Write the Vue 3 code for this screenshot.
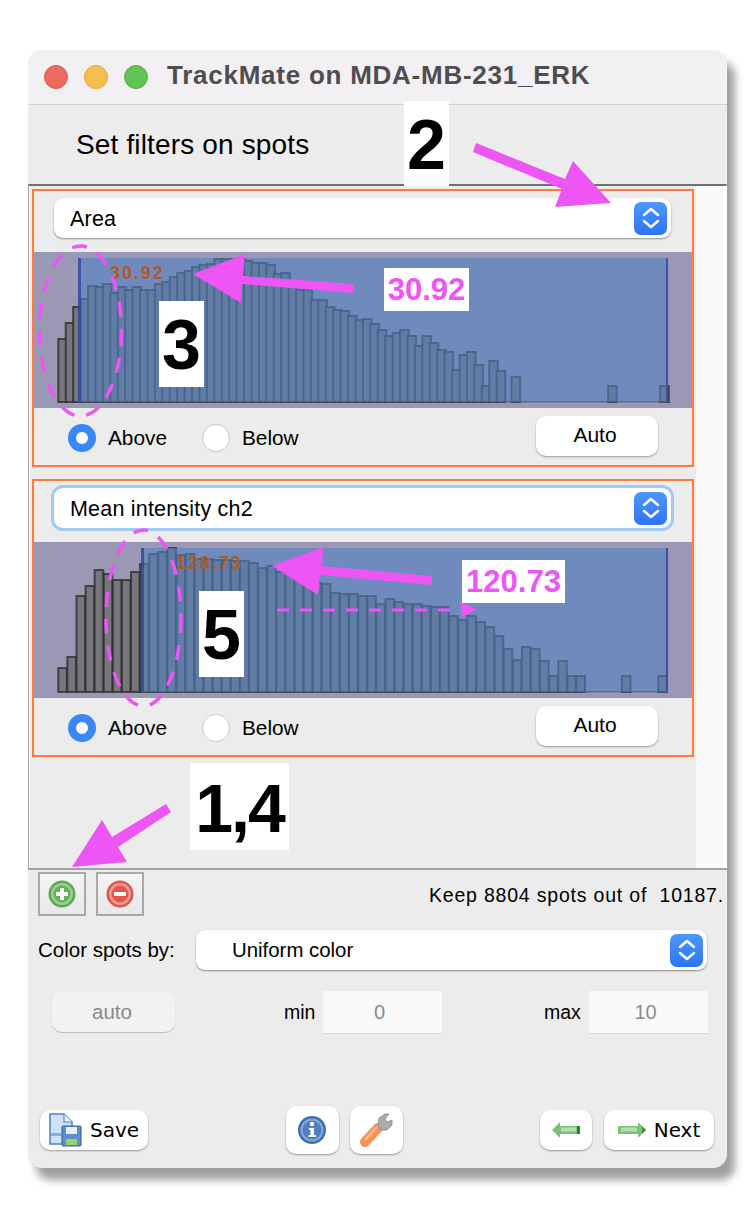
<script setup>
const panels = [
  {
    name: 'Area',
    focused: false,
    value: '30.92',
    threshold: 45,
    labelX: 76,
    step: 7.43,
    heights: [63, 79, 95, 103, 116, 115, 118, 109, 115, 112, 115, 112, 112, 118, 120, 125, 129, 131, 135, 137, 138, 143, 143, 143, 143, 141, 139, 139, 137, 128, 129, 118, 112, 112, 102, 102, 95, 92, 91, 86, 82, 83, 78, 72, 66, 69, 72, 66, 56, 66, 59, 52, 50, 32, 47, 50, 37, 16, 41, 31, 0, 25, 0, 0, 0, 0, 0, 0, 0, 0, 0, 0, 0, 0, 16, 0, 0, 0, 0, 0, 0, 16]
  },
  {
    name: 'Mean intensity ch2',
    focused: true,
    value: '128.73',
    threshold: 108,
    labelX: 142,
    step: 9.09,
    heights: [24, 35, 96, 106, 122, 118, 112, 112, 120, 128, 138, 140, 144, 137, 138, 133, 133, 132, 132, 131, 131, 129, 124, 126, 120, 118, 115, 113, 109, 108, 99, 98, 98, 96, 96, 88, 93, 90, 88, 88, 86, 85, 85, 76, 72, 76, 70, 65, 56, 43, 32, 45, 43, 31, 16, 31, 16, 16, 0, 0, 0, 0, 16, 0, 0, 0, 16]
  }
]

const keepText = 'Keep 8804 spots out of  10187.'

const bars = (panel) => panel.heights
  .map((h, i) => ({ i, h, x: 24.3 + panel.step * i }))
  .filter((b) => b.h > 0)
</script>

<template>
  <div class="page">
    <div class="window">
      <div class="titlebar">
        <span class="light red"></span>
        <span class="light yellow"></span>
        <span class="light green"></span>
        <span class="title">TrackMate on MDA-MB-231_ERK</span>
      </div>
      <div class="heading">Set filters on spots</div>

      <div class="scroller">
        <div class="scroll-main">
          <div v-for="panel in panels" :key="panel.name" class="panel">
            <div class="select panel-select" :class="{ focused: panel.focused }">
              <span class="select-text">{{ panel.name }}</span>
              <span class="stepper">
                <svg width="20" height="24" viewBox="0 0 20 24">
                  <path d="M3 9 L10 3 L17 9 M3 15 L10 21 L17 15" fill="none" stroke="#fff" stroke-width="2.4" stroke-linecap="round" stroke-linejoin="round" />
                </svg>
              </span>
            </div>

            <svg class="hist" width="658" height="156" viewBox="0 0 658 156">
              <rect width="658" height="156" fill="#9a98b4" />
              <g v-for="b in bars(panel)" :key="b.i">
                <rect :x="b.x" :y="150 - b.h" width="8.6" :height="b.h" fill="#77767c" stroke="#2e2e32" stroke-opacity="0.8" stroke-width="2" />
              </g>
              <rect :x="panel.threshold" y="6" :width="633 - panel.threshold" height="144" fill="rgb(84,130,195)" fill-opacity="0.6" />
              <rect :x="panel.threshold - 1" y="6" width="3" height="144" fill="#2f3f9a" fill-opacity="0.75" />
              <rect x="632" y="6" width="2" height="144" fill="#3f50a4" />
              <rect :x="panel.threshold" y="149" :width="633 - panel.threshold" height="1.5" fill="#4a6088" fill-opacity="0.7" />
              <text class="hist-value" :x="panel.labelX" y="27">{{ panel.value }}</text>
            </svg>

            <div class="radio-row">
              <span class="radio on"></span>
              <span class="radio-label">Above</span>
              <span class="radio off"></span>
              <span class="radio-label">Below</span>
              <button class="btn auto-btn">Auto</button>
            </div>
          </div>
        </div>
        <div class="scrollbar"></div>
      </div>

      <div class="bottom">
        <div class="tool-row">
          <button class="tool-btn">
            <svg width="30" height="30" viewBox="0 0 30 30">
              <circle cx="15" cy="15" r="13.5" fill="#5fa75a" />
              <circle cx="15" cy="15" r="11" fill="#9bd08f" />
              <circle cx="15" cy="15" r="8.5" fill="#63b35c" />
              <path d="M15 9 V21 M9 15 H21" stroke="#fff" stroke-width="4" />
            </svg>
          </button>
          <button class="tool-btn">
            <svg width="30" height="30" viewBox="0 0 30 30">
              <circle cx="15" cy="15" r="13.5" fill="#d65a4e" />
              <circle cx="15" cy="15" r="11" fill="#f09a90" />
              <circle cx="15" cy="15" r="8.5" fill="#e2574c" />
              <path d="M9 15 H21" stroke="#fff" stroke-width="4" />
            </svg>
          </button>
          <span class="keep">{{ keepText }}</span>
        </div>

        <div class="color-row">
          <span class="color-label">Color spots by:</span>
          <div class="select color-select">
            <span>Uniform color</span>
            <span class="stepper">
              <svg width="20" height="24" viewBox="0 0 20 24">
                <path d="M3 9 L10 3 L17 9 M3 15 L10 21 L17 15" fill="none" stroke="#fff" stroke-width="2.4" stroke-linecap="round" stroke-linejoin="round" />
              </svg>
            </span>
          </div>
        </div>

        <div class="range-row">
          <button class="auto-disabled">auto</button>
          <span class="min-label">min</span>
          <span class="range-input">0</span>
          <span class="max-label">max</span>
          <span class="range-input">10</span>
        </div>

        <div class="nav-row">
          <button class="btn nav-btn save-btn">
            <svg width="33" height="34" viewBox="0 0 33 34">
              <path d="M1 1 H15 L23 9 V31 H1 Z" fill="#cfe0f7" stroke="#4f86c9" stroke-width="1.6" />
              <path d="M15 1 V9 H23" fill="#eef4fc" stroke="#4f86c9" stroke-width="1.2" />
              <rect x="2" y="20" width="10" height="3" fill="#7fb2ea" />
              <rect x="13" y="13" width="19" height="20" rx="1.5" fill="#5f8fc9" stroke="#34669f" stroke-width="1.2" />
              <rect x="17" y="14" width="11" height="7" fill="#e8eff8" />
              <rect x="17" y="26" width="11" height="6" fill="#9fce6e" />
            </svg>
            <span>Save</span>
          </button>

          <div class="nav-group center">
            <button class="btn icon-btn">
              <svg width="30" height="30" viewBox="0 0 30 30">
                <circle cx="15" cy="15" r="14" fill="#3f6fae" />
                <circle cx="15" cy="15" r="11.5" fill="#86a8d4" />
                <circle cx="15" cy="15" r="9.5" fill="#4f7fbc" />
                <circle cx="15" cy="9" r="2.2" fill="#fff" />
                <path d="M12 13 H17 V20 H19 V22 H11.5 V20 H13.5 V15 H12 Z" fill="#fff" />
              </svg>
            </button>
            <button class="btn icon-btn">
              <svg width="34" height="36" viewBox="0 0 34 36">
                <path d="M6 30 L19 16" stroke="#f3955a" stroke-width="10" stroke-linecap="round" />
                <path d="M7 27 L17 16" stroke="#f9bb91" stroke-width="2.5" stroke-linecap="round" />
                <path d="M19 14 L20 6 L26 2 L30 2 L26 7 L28 10 L33 8 L33 13 L28 18 L22 18 Z" fill="#ababab" stroke="#868686" stroke-width="0.8" />
              </svg>
            </button>
          </div>

          <div class="nav-group">
            <button class="btn back-btn">
              <svg width="28" height="16" viewBox="0 0 28 16">
                <path d="M0 8 L8 0 V4 H28 V12 H8 V16 Z" fill="#7cc07a" />
                <rect x="9" y="5.5" width="15" height="4" fill="#b6deb0" />
                <rect x="25" y="4" width="3" height="8" fill="#2f7a33" />
              </svg>
            </button>
            <button class="btn nav-btn next-btn">
              <svg width="28" height="16" viewBox="0 0 28 16">
                <path d="M28 8 L20 0 V4 H0 V12 H20 V16 Z" fill="#7cc07a" />
                <rect x="3" y="5.5" width="16" height="4" fill="#b6deb0" />
                <path d="M28 8 L24 4 V12 Z" fill="#3f8f45" />
              </svg>
              <span>Next</span>
            </button>
          </div>
        </div>
      </div>
    </div>

    <!-- annotations drawn over the screenshot -->
    <svg class="marks" width="754" height="1220" viewBox="0 0 754 1220">
      <g fill="#ee55f5">
        <polygon points="476,143 565,179 573,161 611,203 555,207 562,189 473,152" />
        <polygon points="193,274 245,254 243,276 354,284 353,293 242,284 241,303" />
        <polygon points="272,566 323,547 322,566 432,576 432,585 320,575 318,595" />
        <polygon points="72,867 102,820 112,837 166,804 171,812 118,847 127,862" />
        <polygon points="460,602 477,609.5 462,617" />
      </g>
      <g fill="none" stroke="#ee55f5" stroke-width="3.5">
        <ellipse cx="80.5" cy="331" rx="41" ry="85" stroke-dasharray="15 12" />
        <ellipse cx="143.5" cy="618" rx="37.5" ry="88" stroke-dasharray="15 12" />
        <path d="M277 610 H460" stroke-width="3" stroke-dasharray="12 11" />
      </g>
    </svg>
    <div class="note n2">2</div>
    <div class="note n3">3</div>
    <div class="note n5">5</div>
    <div class="note n14">1,4</div>
    <div class="pink p1">30.92</div>
    <div class="pink p2">120.73</div>
  </div>
</template>

<style scoped>
.page {
  position: relative;
  width: 754px;
  height: 1220px;
  padding: 50px 0 0 28px;
  box-sizing: border-box;
  background: #fff;
  overflow: hidden;
  font-family: "Liberation Sans", Arial, sans-serif;
  color: #000;
}

.window {
  width: 699px;
  height: 1118px;
  display: flex;
  flex-direction: column;
  background: #ececec;
  border-radius: 14px;
  overflow: hidden;
  box-shadow: 8px 12px 8px rgba(0, 0, 0, 0.38);
}

.titlebar {
  height: 54px;
  flex: none;
  display: flex;
  align-items: center;
  padding-left: 16px;
  background: #f2f0f3;
  border-bottom: 1px solid #d2d0d2;
}

.light {
  width: 24px;
  height: 24px;
  border-radius: 50%;
  margin-right: 16px;
  box-sizing: border-box;
}

.red { background: #ee6a5f; border: 1px solid #d9584e; }
.yellow { background: #f5bf4f; border: 1px solid #dfa63c; }
.green { background: #61c454; border: 1px solid #52ad47; }

.title {
  margin-left: 3px;
  margin-bottom: 3px;
  font-size: 26px;
  font-weight: bold;
  letter-spacing: 0.75px;
  color: #4e4d4f;
  white-space: nowrap;
}

.heading {
  height: 79px;
  flex: none;
  box-sizing: border-box;
  padding: 22px 0 0 48px;
  font-size: 28px;
  letter-spacing: 0.15px;
  line-height: 36px;
}

.scroller {
  flex: none;
  height: 686px;
  display: flex;
  box-sizing: border-box;
  border-top: 2px solid #707070;
  border-left: 2px solid #a3a3a3;
  border-right: 2px solid #a3a3a3;
  border-bottom: 2px solid #a3a3a3;
}

.scroll-main {
  flex: 1;
  padding: 3px 2px 0 2px;
  border-left: 1px solid #fff;
  margin-left: -1px;
}

.scrollbar {
  width: 28px;
  flex: none;
  background: #fafafa;
  border-right: 3px solid #fff;
}

.panel {
  height: 278px;
  box-sizing: border-box;
  border: 2px solid #ff7a3d;
  margin-bottom: 12px;
}

.panel:last-child {
  margin-bottom: 0;
}

.select {
  height: 40px;
  box-sizing: border-box;
  display: flex;
  align-items: center;
  justify-content: space-between;
  background: #fff;
  border-radius: 9px;
  box-shadow: 0 1px 2px rgba(0, 0, 0, 0.4);
}

.panel-select {
  margin: 7px 21px 14px 20px;
  padding: 0 4px 0 16px;
  font-size: 21.5px;
  letter-spacing: 0.2px;
}

.select-text {
  padding-top: 2px;
}

.panel-select.focused {
  box-shadow: 0 0 0 3px #a3c9f3;
}

.stepper {
  width: 33px;
  height: 33px;
  display: flex;
  align-items: center;
  justify-content: center;
  border-radius: 7px;
  background: linear-gradient(#4c98fb, #2d74f7);
}

.hist {
  display: block;
}

.hist-value {
  font-family: "Liberation Sans", Arial, sans-serif;
  font-size: 18px;
  font-weight: bold;
  letter-spacing: 1.9px;
  fill: #b5581f;
}

.radio-row {
  height: 56px;
  display: flex;
  align-items: center;
  padding-left: 34px;
  padding-top: 4px;
  box-sizing: border-box;
}

.radio {
  width: 28px;
  height: 28px;
  border-radius: 50%;
  box-sizing: border-box;
  flex: none;
}

.radio.on {
  border: 8px solid #3a87f8;
  background: #fff;
}

.radio.off {
  background: #fff;
  border: 1px solid #c8c8c8;
}

.radio-label {
  font-size: 20.8px;
  margin-left: 12px;
  width: 94px;
}

.radio-label + .radio + .radio-label {
  width: 0;
}

.btn {
  display: flex;
  align-items: center;
  justify-content: center;
  padding: 0;
  border: none;
  background: #fff;
  border-radius: 10px;
  box-shadow: 0 1px 2px rgba(0, 0, 0, 0.35);
  color: #000;
  font-family: "Liberation Sans", Arial, sans-serif;
}

.auto-btn {
  width: 122px;
  height: 40px;
  margin-left: auto;
  margin-right: 34px;
  margin-top: -5px;
  padding: 0 4px 2px 0;
  font-size: 21px;
}

.bottom {
  flex: 1;
  padding-top: 2px;
}

.tool-row {
  display: flex;
  align-items: center;
  height: 44px;
  padding: 0 3px 0 10px;
  gap: 10px;
}

.tool-btn {
  width: 48px;
  height: 44px;
  padding: 0;
  box-sizing: border-box;
  display: flex;
  align-items: center;
  justify-content: center;
  border: 2px solid #a8a8a8;
  background: linear-gradient(#f4f4f4, #e8e8e8);
}

.keep {
  margin-left: auto;
  padding-top: 3px;
  font-size: 19.5px;
  letter-spacing: 0.8px;
  white-space: pre;
}

.color-row {
  display: flex;
  align-items: center;
  margin-top: 14px;
  padding-left: 10px;
}

.color-label {
  width: 158px;
  font-size: 20.5px;
  white-space: nowrap;
}

.color-select {
  width: 511px;
  padding: 0 4px 0 36px;
  font-size: 20.4px;
}

.range-row {
  display: flex;
  align-items: center;
  margin-top: 21px;
  padding-left: 24px;
}

.auto-disabled {
  width: 123px;
  height: 40px;
  padding: 0 3px 0 0;
  border: none;
  border-radius: 10px;
  background: #f2f2f2;
  box-shadow: 0 1px 1px rgba(0, 0, 0, 0.2);
  color: #8a8a8a;
  font-family: "Liberation Sans", Arial, sans-serif;
  font-size: 20.5px;
}

.min-label,
.max-label {
  font-size: 19.5px;
  white-space: nowrap;
}

.min-label {
  width: 31px;
  margin-left: 109px;
  margin-right: 8px;
}

.max-label {
  width: 38px;
  margin-left: 102px;
  margin-right: 7px;
}

.range-input {
  width: 119px;
  height: 42px;
  box-sizing: border-box;
  padding-right: 6px;
  display: flex;
  align-items: center;
  justify-content: center;
  background: #f9f9f9;
  box-shadow: 0 1px 0 #d8d8d8;
  color: #8c8c8c;
  font-size: 20px;
}

.nav-row {
  display: flex;
  align-items: center;
  justify-content: space-between;
  margin-top: 73px;
  height: 48px;
  padding: 0 13px 0 12px;
}

.nav-group {
  display: flex;
  align-items: center;
  gap: 12px;
}

.nav-group.center {
  gap: 11px;
}

.nav-btn {
  height: 40px;
  gap: 8px;
  font-family: "DejaVu Sans", sans-serif;
  font-size: 20px;
}

.save-btn {
  width: 108px;
}

.next-btn {
  width: 110px;
}

.icon-btn {
  width: 53px;
  height: 48px;
}

.back-btn {
  width: 52px;
  height: 40px;
}

.marks {
  position: absolute;
  left: 0;
  top: 0;
  pointer-events: none;
}

.note {
  position: absolute;
  box-sizing: border-box;
  padding-top: 2px;
  background: #fff;
  display: flex;
  align-items: center;
  justify-content: center;
  font-weight: bold;
  font-size: 70px;
  line-height: 1;
}

.n2 { left: 404px; top: 101px; width: 45px; height: 85px; }
.n3 { left: 159px; top: 301px; width: 45px; height: 86px; }
.n5 { left: 199px; top: 591px; width: 45px; height: 86px; }
.n14 { left: 190px; top: 763px; width: 99px; height: 87px; font-size: 68px; letter-spacing: -2px; }

.pink {
  position: absolute;
  height: 43px;
  background: #fff;
  display: flex;
  align-items: center;
  justify-content: center;
  color: #ee55f5;
  font-weight: bold;
  font-size: 31px;
}

.p1 { left: 384px; top: 268px; width: 85px; }
.p2 { left: 462px; top: 560px; width: 103px; }
</style>
